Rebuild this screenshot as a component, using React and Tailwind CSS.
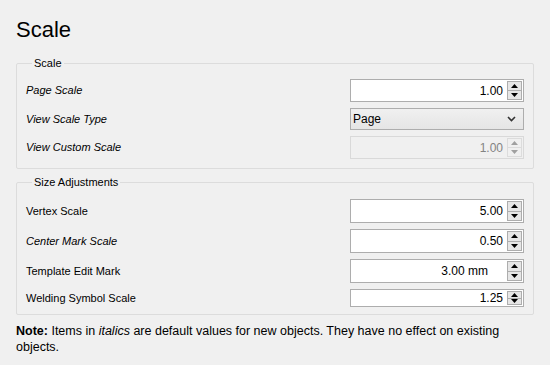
import React from "react";

const font = { fontFamily: '"Liberation Sans", Arial, sans-serif' };

function Arrows({ disabled }) {
  const c = disabled ? "#a0a0a0" : "#000";
  const b = disabled ? "border-[#dcdcdc] bg-[#f0f0f0]" : "border-[#adadad] bg-[#e6e6e6]";
  return (
    <div className="flex flex-col h-full w-[15px] shrink-0">
      <div className={`flex-1 border ${b} flex items-center justify-center`}>
        <svg width="7" height="4" viewBox="0 0 7 4"><path d="M3.5 0L7 4H0z" fill={c} /></svg>
      </div>
      <div className={`flex-1 border border-t-0 ${b} flex items-center justify-center`}>
        <svg width="7" height="4" viewBox="0 0 7 4"><path d="M0 0h7L3.5 4z" fill={c} /></svg>
      </div>
    </div>
  );
}

function Spin({ value, h = "h-[23px]", disabled, pr = "pr-[4px]" }) {
  return (
    <div
      className={`w-[174px] ${h} border flex items-stretch p-[1px] ${
        disabled ? "border-[#d9d9d9] bg-[#f0f0f0]" : "border-[#adadad] bg-white"
      }`}
    >
      <div
        className={`flex-1 flex items-center justify-end ${pr} text-[12px] ${
          disabled ? "text-[#838383]" : "text-black"
        }`}
      >
        {value}
      </div>
      <Arrows disabled={disabled} />
    </div>
  );
}

function Combo() {
  return (
    <div className="w-[174px] h-[22px] border border-[#adadad] bg-gradient-to-b from-[#f0f0f0] to-[#e5e5e5] flex items-center justify-between pl-[2px] pr-[7px] text-[12px]">
      <span>Page</span>
      <svg width="9" height="6" viewBox="0 0 9 6">
        <path d="M1 1l3.5 3.5L8 1" stroke="#333" strokeWidth="1.6" fill="none" />
      </svg>
    </div>
  );
}

function Row({ label, italic, children, className = "" }) {
  return (
    <div className={`flex items-center justify-between ${className}`}>
      <span className={`text-[11px] ${italic ? "italic" : ""}`}>{label}</span>
      {children}
    </div>
  );
}

function Group({ title, children, className = "" }) {
  return (
    <fieldset className={`border border-[#dcdcdc] rounded-[2px] pl-[9px] pr-[9px] ${className}`}>
      <legend className="ml-[6px] px-[2px] text-[11px] leading-[14px]">{title}</legend>
      {children}
    </fieldset>
  );
}

export default function App() {
  return (
    <div className="w-[550px] h-[365px] bg-[#f0f0f0] text-black px-[16px] overflow-hidden" style={font}>
      <div className="text-[22px] leading-[26px] pt-[17px] h-[56px]">Scale</div>
      <Group title="Scale" className="h-[113px]">
        <div className="flex flex-col gap-[6px] pt-[9px]">
          <Row label="Page Scale" italic>
            <Spin value="1.00" />
          </Row>
          <Row label="View Scale Type" italic>
            <Combo />
          </Row>
          <Row label="View Custom Scale" italic>
            <Spin value="1.00" disabled />
          </Row>
        </div>
      </Group>
      <Group title="Size Adjustments" className="h-[140px] mt-[6px]">
        <div className="flex flex-col gap-[6px] pt-[10px]">
          <Row label="Vertex Scale">
            <Spin value="5.00" h="h-[24px]" />
          </Row>
          <Row label="Center Mark Scale" italic>
            <Spin value="0.50" h="h-[24px]" />
          </Row>
          <Row label="Template Edit Mark">
            <Spin value="3.00 mm" h="h-[24px]" pr="pr-[19px]" />
          </Row>
          <Row label="Welding Symbol Scale">
            <Spin value="1.25" h="h-[18px]" />
          </Row>
        </div>
      </Group>
      <p className="text-[12.5px] leading-[16px] mt-[8px]">
        <b>Note:</b> Items in <i>italics</i> are default values for new objects. They have no effect on existing objects.
      </p>
    </div>
  );
}
